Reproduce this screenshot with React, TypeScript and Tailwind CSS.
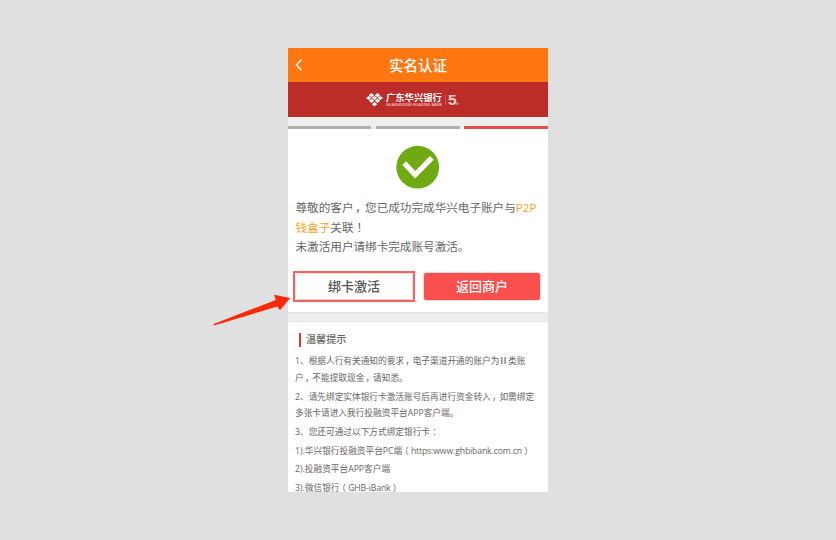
import type { ReactNode } from 'react';

const sans = "font-['Open_Sans','Noto_Sans_CJK_SC',sans-serif]";

function Mark({ children }: { children: ReactNode }) {
  return (
    <span className="inline-block w-[1em] text-center font-['Noto_Sans_CJK_SC'] leading-none [font-feature-settings:'halt']">
      {children}
    </span>
  );
}

function Comma() {
  return (
    <span className="inline-block w-[1em] pr-[0.22em] text-center font-['Noto_Sans_CJK_SC'] leading-none [font-feature-settings:'halt']">
      ，
    </span>
  );
}

function BankEmblem() {
  return (
    <svg className="shrink-0" width="17" height="14" viewBox="0 0 17 14" fill="#fff">
      {[
        [5.5, 2.2], [11.5, 2.2], [2.7, 5], [8.5, 5], [14.3, 5],
        [5.5, 7.8], [11.5, 7.8], [8.5, 11.2],
      ].map(([x, y]) => (
        <path key={`${x}-${y}`} d={`M${x - 2.7} ${y}L${x} ${y - 2.1}L${x + 2.7} ${y}L${x} ${y + 2.1}Z`} />
      ))}
    </svg>
  );
}

export default function App() {
  return (
    <div className={`relative flex h-[540px] w-[836px] justify-center overflow-hidden bg-[#e0e0e0] pt-12 ${sans}`}>
      <main className="flex h-[444px] w-[260px] flex-col overflow-hidden bg-white text-[#666]">
        <header className="grid h-[34px] shrink-0 grid-cols-[60px_1fr_60px] items-center bg-[#ff7711] text-white">
          <svg className="ml-[7px]" width="8" height="12" viewBox="0 0 8 12" fill="none" stroke="#fff" strokeWidth="1.5">
            <path d="M6.5 .8L1.5 6L6.5 11.2" />
          </svg>
          <h1 className="pt-[2px] text-center text-[14.5px] leading-[32px] font-medium">实名认证</h1>
        </header>
        <div className="flex h-[35px] shrink-0 items-center bg-[#bc2c29] pl-[78px] text-white">
          <BankEmblem />
          <div className="ml-[3px] flex w-[57px] flex-col pt-px">
            <span className="text-[9.3px] leading-[9px] font-bold whitespace-nowrap">广东华兴银行</span>
            <svg className="mt-px overflow-visible" width="57" height="4" viewBox="0 0 57 4">
              <text x="0" y="3.4" textLength="56" lengthAdjust="spacingAndGlyphs" fontSize="3.6" fontWeight="600" fill="#f3d6d5">
                GUANGDONG HUAXING BANK
              </text>
            </svg>
          </div>
          <span className="ml-[2px] h-[10px] w-px bg-[#cf5a57]" />
          <span className="ml-[2px] font-['Liberation_Sans'] text-[15.5px] leading-[14px] font-bold text-[#f3cfce]">5</span>
          <span className="mt-[8px] -ml-px text-[3.5px] leading-[4px] text-[#f3cfce]">th</span>
        </div>
        <div className="flex h-3 shrink-0 items-end justify-between bg-[#efefef]">
          <i className="h-[3px] w-[83px] bg-[#b0b0b0]" />
          <i className="h-[3px] w-[84px] bg-[#b0b0b0]" />
          <i className="h-[3px] w-[84px] bg-[#e84c4a]" />
        </div>
        <section className="flex h-[183px] shrink-0 flex-col">
          <svg className="mt-[16px] ml-[108px] shrink-0" width="44" height="44" viewBox="0 0 44 44">
            <circle cx="21.7" cy="22.2" r="21.4" fill="#70aa13" />
            <path d="M8.2 18L19.1 29.8L35.8 12.9" fill="none" stroke="#fff" strokeWidth="5.2" />
          </svg>
          <div className="mt-[9px] ml-[7.5px] text-[11.6px] leading-[19.5px] whitespace-nowrap">
            <p>尊敬的客户<Comma />您已成功完成华兴电子账户与<span className="text-[#ffa02c]">P2P</span></p>
            <p><span className="text-[#ffa02c]">钱盒子</span>关联<Mark>！</Mark></p>
            <p>未激活用户请绑卡完成账号激活。</p>
          </div>
          <div className="mt-[14px] ml-[5px] flex items-center text-[13px] font-medium">
            <div className="h-[31px] w-[122px] border-2 border-[#f9615e]">
              <button className="flex h-full w-full items-center justify-center rounded-[3px] border border-[#e6e6e6] border-b-[#d2d2d2] bg-white pt-[2px] text-[#555]">绑卡激活</button>
            </div>
            <button className="ml-[9px] flex h-[27px] w-[116px] items-center justify-center rounded-[2px] bg-[#fa504d] pt-[2px] text-white shadow-[0_0_1px_1px_#ddd]">返回商户</button>
          </div>
        </section>
        <div className="h-[10px] shrink-0 border-y border-[#e4e4e4] bg-[#eee]" />
        <section className="pt-[10px] pl-[7px]">
          <h2 className="ml-[4px] flex h-[15px] items-center text-[10.1px] font-medium">
            <i className="mr-[5px] h-[14px] w-[2px] bg-[#e03432]" />温馨提示
          </h2>
          <div className="mt-[6.3px] flex flex-col gap-[1.8px] text-[8.68px] leading-[16.8px] whitespace-nowrap">
            <p>1、根据人行有关通知的要求<Comma />电子渠道开通的账户为<span className="inline-block w-[1em] scale-x-130 text-center">Ⅱ</span>类账<br />户<Comma />不能提取现金<Comma />请知悉。</p>
            <p>2、请先绑定实体银行卡激活账号后再进行资金转入<Comma />如需绑定<br />多张卡请进入我行投融资平台APP客户端。</p>
            <p>3、您还可通过以下方式绑定银行卡<Mark>：</Mark></p>
            <p>1).华兴银行投融资平台PC端<Mark>（</Mark><span className="tracking-[-0.14px]">https:www.ghbibank.com.cn</span><Mark>）</Mark></p>
            <p>2).投融资平台APP客户端</p>
            <p>3).微信银行<Mark>（</Mark><span className="tracking-[-0.14px]">GHB-iBank</span><Mark>）</Mark></p>
          </div>
        </section>
      </main>
      <svg className="absolute top-[290px] left-[210px]" width="84" height="38" viewBox="0 0 84 38">
        <path d="M3.6 34L65.7 10L64 4.8L80.2 8L70 20.2L67.2 16.6L4 35.5Z" fill="#ff2a05" />
      </svg>
    </div>
  );
}
